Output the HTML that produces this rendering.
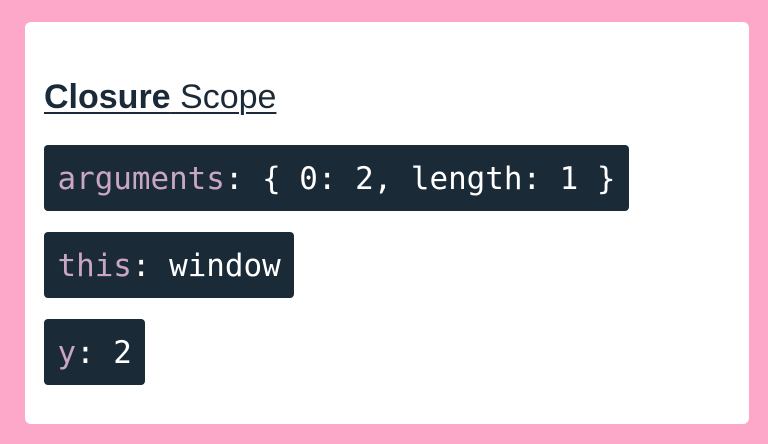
<!DOCTYPE html>
<html><head><style>
html,body{margin:0;padding:0;}
body{width:768px;height:444px;background:#fda8c8;position:relative;overflow:hidden;}
.card{position:absolute;left:25px;top:22px;width:724px;height:402px;background:#fff;border-radius:6px;}
h1{position:absolute;left:44px;top:77px;margin:0;font-family:"Liberation Sans",sans-serif;font-size:34px;font-weight:normal;color:#1b2a38;text-decoration:underline;text-decoration-thickness:2px;text-underline-offset:4px;line-height:40px;letter-spacing:0;}
h1 b{font-weight:bold;}
.c{position:absolute;left:44px;height:66px;box-sizing:border-box;padding:0 13.5px;background:#1a2a37;border-radius:4px;font-family:"DejaVu Sans Mono",monospace;font-size:30.9px;line-height:68px;color:#fff;white-space:pre;}
.k{color:#c9a6c2;}
</style></head><body>
<div class="card"></div>
<h1><b>Closure</b> Scope</h1>
<div class="c" style="top:145px"><span class="k">arguments</span>: { 0: 2, length: 1 }</div>
<div class="c" style="top:232px"><span class="k">this</span>: window</div>
<div class="c" style="top:319px"><span class="k">y</span>: 2</div>
</body></html>
